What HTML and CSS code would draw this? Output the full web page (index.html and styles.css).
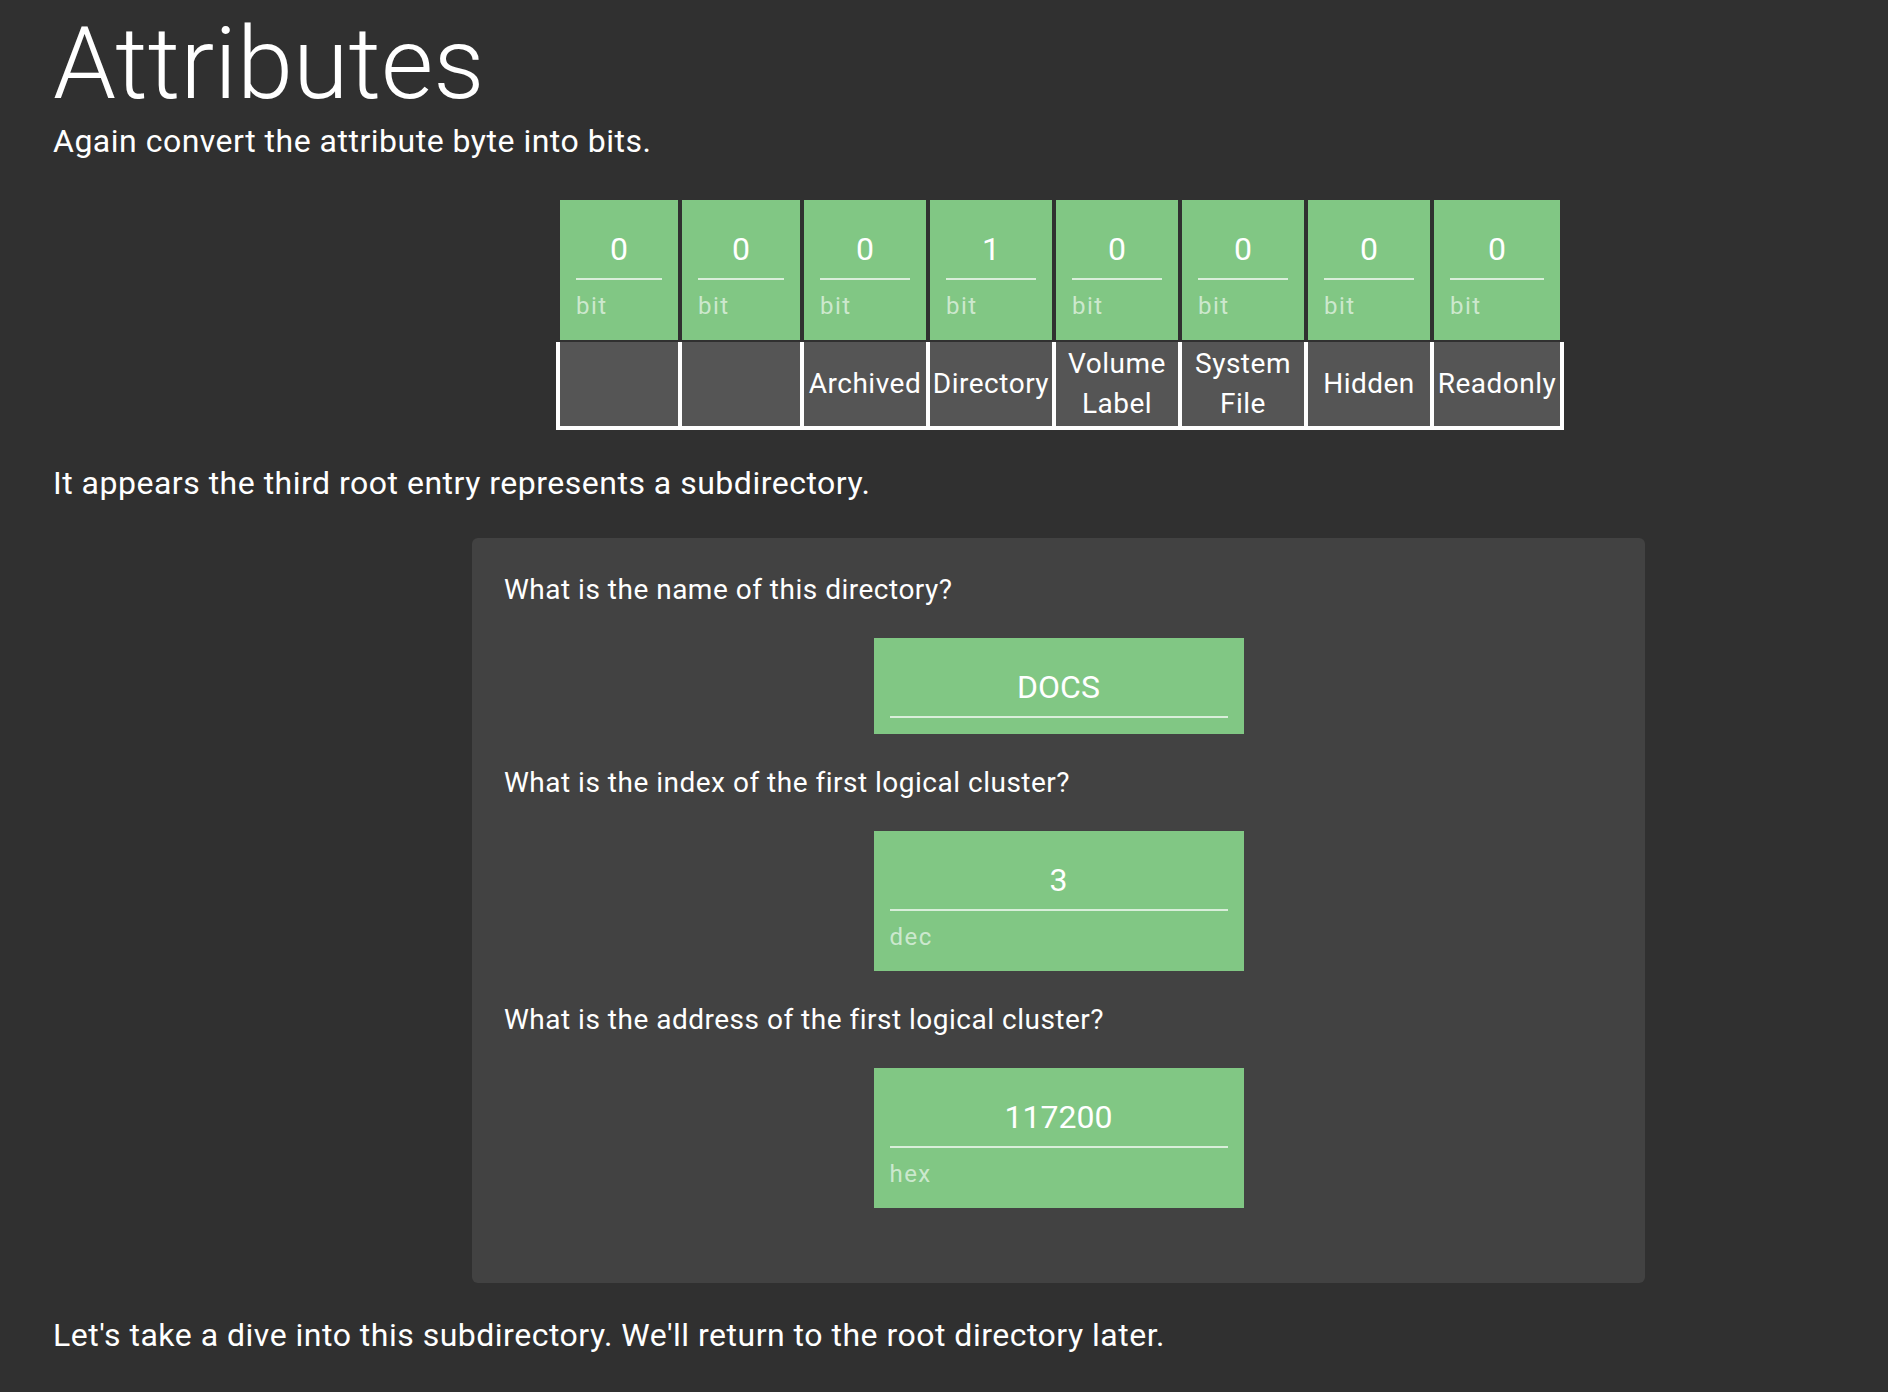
FILE: index.html
```html
<!DOCTYPE html>
<html lang="en">
<head>
<meta charset="utf-8">
<title>Attributes</title>
<link rel="stylesheet" href="styles.css">
</head>
<body>
<main class="page">
  <h1 class="title">Attributes</h1>
  <p class="text subtitle">Again convert the attribute byte into bits.</p>

  <div class="bits">
    <div class="bit-row">
      <div class="field bit w118"><div class="value">0</div><div class="hint">bit</div></div>
      <div class="field bit w118"><div class="value">0</div><div class="hint">bit</div></div>
      <div class="field bit w122"><div class="value">0</div><div class="hint">bit</div></div>
      <div class="field bit w122"><div class="value">1</div><div class="hint">bit</div></div>
      <div class="field bit w122"><div class="value">0</div><div class="hint">bit</div></div>
      <div class="field bit w122"><div class="value">0</div><div class="hint">bit</div></div>
      <div class="field bit w122"><div class="value">0</div><div class="hint">bit</div></div>
      <div class="field bit w126"><div class="value">0</div><div class="hint">bit</div></div>
    </div>
    <div class="label-row">
      <div class="label w118"></div>
      <div class="label w118"></div>
      <div class="label w122">Archived</div>
      <div class="label w122">Directory</div>
      <div class="label w122">Volume<br>Label</div>
      <div class="label w122">System<br>File</div>
      <div class="label w122">Hidden</div>
      <div class="label w126">Readonly</div>
    </div>
  </div>

  <p class="text after-table">It appears the third root entry represents a subdirectory.</p>

  <section class="card">
    <p class="question">What is the name of this directory?</p>
    <div class="field answer"><div class="value">DOCS</div></div>

    <p class="question">What is the index of the first logical cluster?</p>
    <div class="field answer"><div class="value">3</div><div class="hint">dec</div></div>

    <p class="question">What is the address of the first logical cluster?</p>
    <div class="field answer"><div class="value">117200</div><div class="hint">hex</div></div>
  </section>

  <p class="text footer">Let's take a dive into this subdirectory. We'll return to the root directory later.</p>
</main>
</body>
</html>
```

FILE: styles.css
```css
html, body {
  margin: 0;
  padding: 0;
  background: #303030;
}

body {
  font-family: Roboto, "Noto Sans", "Liberation Sans", sans-serif;
  color: #ffffff;
}

.page {
  padding: 8px 0 40px 53px;
}

.title {
  margin: 0;
  font-size: 101px;
  font-weight: 300;
  line-height: 112px;
  letter-spacing: 0;
}

.text {
  margin: 0;
  font-size: 32px;
  line-height: 40px;
  letter-spacing: 0.5px;
}

.subtitle {
  margin-top: 1px;
}

/* bit table */
.bits {
  margin: 39px 0 0 503px;
  width: max-content;
}

.bit-row {
  display: flex;
  gap: 4px;
  padding: 0 4px;
}

.label-row {
  display: flex;
  gap: 4px;
  margin-top: 2px;
  padding: 0 4px 4px;
  background: #ffffff;
}

.w118 { width: 118px; }
.w122 { width: 122px; }
.w126 { width: 126px; }

.label {
  box-sizing: border-box;
  height: 84px;
  background: #555555;
  display: flex;
  align-items: center;
  justify-content: center;
  text-align: center;
  font-size: 28px;
  line-height: 40px;
  letter-spacing: 0.5px;
  white-space: nowrap;
}

/* input-like fields */
.field {
  box-sizing: border-box;
  background: #81c784;
  padding: 0 16px 16px;
}

.value {
  padding: 29px 0 9px;
  font-size: 32px;
  line-height: 40px;
  text-align: center;
  color: #ffffff;
  border-bottom: 2px solid rgba(255, 255, 255, 0.7);
}

.hint {
  margin: 12px 0 4px;
  font-size: 24px;
  line-height: 28px;
  letter-spacing: 0.06em;
  color: rgba(255, 255, 255, 0.62);
}

.after-table {
  margin-top: 33px;
}

/* card */
.card {
  box-sizing: border-box;
  width: 1173px;
  margin: 35px 0 0 419px;
  padding: 32px 32px 47px;
  background: #424242;
  border-radius: 6px;
  display: flex;
  flex-direction: column;
}

.question {
  margin: 0 0 28px;
  font-size: 28px;
  line-height: 40px;
  letter-spacing: 0.5px;
}

.answer {
  width: 370px;
  align-self: center;
  margin-bottom: 29px;
}

.answer:last-child {
  margin-bottom: 28px;
}

.footer {
  margin-top: 32px;
}
```
